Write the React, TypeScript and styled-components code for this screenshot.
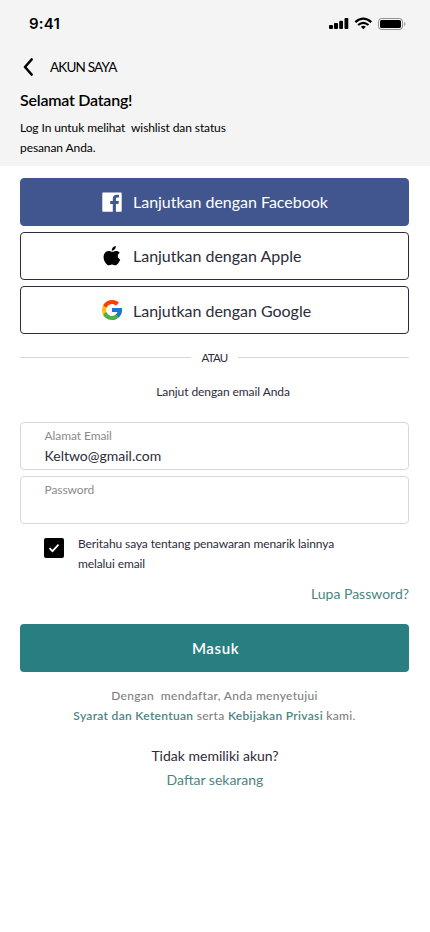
import React from "react";
import styled, { createGlobalStyle } from "styled-components";

const Global = createGlobalStyle`
  * { box-sizing: border-box; }
  body { margin: 0; background: #fff; }
  button, input { font: inherit; }
`;

const ink = "#2d2c39";
const teal = "#4b8583";

const Screen = styled.div`
  width: 430px;
  height: 932px;
  background: #fff;
  color: ${ink};
  font-family: Lato, "Liberation Sans", sans-serif;
  overflow: hidden;
`;

const Header = styled.header`
  height: 166px;
  background: #f4f4f4;
  color: #000;
`;

const StatusBar = styled.div`
  display: flex;
  justify-content: space-between;
  height: 47px;
  padding: 13px 24px 0 29px;
`;

const Clock = styled.span`
  margin-top: 1px;
  font: 600 15px/20px Inter, sans-serif;
  letter-spacing: 0.2px;
`;

const StatusIcons = styled.svg`
  width: 78px;
  height: 14px;
  margin-top: 4px;
`;

const TitleBar = styled.div`
  display: flex;
  align-items: center;
  height: 40px;
  padding-left: 23px;
  gap: 17px;
`;

const PageTitle = styled.span`
  font-size: 13.5px;
  line-height: 20px;
  letter-spacing: -0.8px;
`;

const Welcome = styled.h1`
  margin: 2px 20px 0;
  font-size: 16px;
  line-height: 22px;
  font-weight: 600;
  letter-spacing: -0.23px;
`;

const Intro = styled.p`
  margin: 7px 20px 0;
  font-size: 12px;
  line-height: 20px;
  white-space: pre-wrap;
  letter-spacing: -0.09px;
`;

const Main = styled.main`
  display: flex;
  flex-direction: column;
  padding: 12px 21px 0 20px;
`;

const SocialList = styled.div`
  display: grid;
  gap: 6px;
`;

const SocialButton = styled.button<{ $filled?: boolean }>`
  display: flex;
  align-items: center;
  gap: 11px;
  height: 48px;
  padding: 0 0 0 81px;
  border: 1px solid ${(p) => (p.$filled ? "#41568f" : ink)};
  border-radius: 4px;
  background: ${(p) => (p.$filled ? "#41568f" : "#fff")};
  color: ${(p) => (p.$filled ? "#fff" : ink)};
  font-size: 16px;
  line-height: 24px;
  letter-spacing: -0.02px;
  svg { flex: none; }
`;

const SocialLabel = styled.span<{ $drop?: number }>`
  padding-top: ${(p) => p.$drop ?? 0}px;
`;

const Divider = styled.div`
  display: flex;
  align-items: center;
  gap: 10px;
  height: 20px;
  margin-top: 13px;
  font-size: 11.5px;
  letter-spacing: -0.7px;
  &::before, &::after {
    content: "";
    flex: 1;
    height: 1px;
    background: #d8d8d8;
  }
`;

const EmailHint = styled.p`
  margin: 15px 0 0 17px;
  text-align: center;
  font-size: 12px;
  line-height: 20px;
  letter-spacing: -0.08px;
`;

const Fields = styled.div`
  display: grid;
  gap: 6px;
  margin-top: 20px;
`;

const Field = styled.label`
  display: flex;
  flex-direction: column;
  height: 48px;
  padding: 3px 23px 0 23.5px;
  border: 1px solid #d8d8d8;
  border-radius: 4px;
`;

const FieldLabel = styled.span`
  color: #8b8b8b;
  font-size: 12px;
  line-height: 20px;
  letter-spacing: -0.08px;
`;

const FieldValue = styled.span`
  font-size: 14px;
  line-height: 20px;
`;

const OptIn = styled.div`
  display: flex;
  gap: 14px;
  margin: 10px 0 0 24px;
  font-size: 12px;
  line-height: 20px;
  letter-spacing: -0.1px;
`;

const CheckBox = styled.span`
  display: grid;
  place-items: center;
  width: 20px;
  height: 20px;
  margin-top: 4px;
  border-radius: 2px;
  background: #000;
`;

const ForgotLink = styled.a`
  align-self: flex-end;
  margin-top: 10px;
  color: ${teal};
  font-size: 14px;
  line-height: 20px;
`;

const SubmitButton = styled.button`
  height: 48px;
  margin-top: 20px;
  padding: 0 0 0 2px;
  border: 0;
  border-radius: 4px;
  background: #297e82;
  color: #fff;
  font-size: 15px;
  font-weight: 600;
  letter-spacing: 0.6px;
`;

const Terms = styled.p`
  margin: 14px 0 0;
  color: #7f7f7f;
  text-align: center;
  white-space: pre-wrap;
  font-size: 12px;
  line-height: 20px;
  letter-spacing: 0.31px;
  font-weight: 500;
  a { color: ${teal}; font-weight: 600; }
`;

const SignUp = styled.div`
  display: flex;
  flex-direction: column;
  align-items: center;
  margin-top: 18px;
  padding-left: 1px;
  font-size: 14px;
  line-height: 24px;
  a { color: ${teal}; }
`;

const StatusGlyphs = () => (
  <StatusIcons viewBox="0 0 78 14">
    <rect x="1" y="8" width="4" height="4" rx="1" />
    <rect x="6" y="6" width="4" height="6" rx="1" />
    <rect x="11.2" y="3.7" width="3.8" height="8.3" rx="1" />
    <rect x="16.5" y="1" width="3.8" height="11" rx="1" />
    <g fill="none" stroke="#000" strokeWidth="2.2">
      <path d="M27.3 5.1Q35.3-1.8 43.3 5.1" />
      <path d="M30.1 8Q35.3 3.6 40.5 8" />
    </g>
    <path d="M32.8 9.7Q35.3 7.8 37.8 9.7L35.3 12.2Z" />
    <rect x="50.5" y="1.5" width="24" height="11" rx="3" fill="none" stroke="#000" strokeOpacity=".4" />
    <rect x="52" y="3" width="21" height="8" rx="1.6" />
    <path d="M76.2 5v4c1.7-.7 1.7-3.3 0-4Z" fillOpacity=".4" />
  </StatusIcons>
);

const BackIcon = () => (
  <svg width="10" height="18" viewBox="0 0 10 18" fill="none" stroke="#000" strokeWidth="2.6" strokeLinecap="round" strokeLinejoin="round">
    <path d="M8.6 1.5 2 9l6.600 7.500" />
  </svg>
);

const FacebookIcon = () => (
  <svg width="20" height="20" viewBox="0 0 20 20">
    <path fill="#fff" d="M1 .5h18q.7 0 .7.7V19q0 .7-.7.7h-5.100V12h2.600l.4-3h-3V7.100c0-.9.3-1.500 1.500-1.500H17V2.900c-.3 0-1.200-.1-2.300-.1-2.300 0-3.900 1.400-3.900 4V9H8.200v3h2.600v7.700H1q-.7 0-.7-.7V1.200Q.3.5 1 .5Z" />
  </svg>
);

const AppleIcon = () => (
  <svg width="20" height="20" viewBox="0 0 20 20">
    <path d="M13.800.1c.1 1.200-.3 2.300-1 3.200-.8.9-1.900 1.500-3 1.400-.1-1.100.4-2.300 1.100-3.100C11.600.8 12.800.2 13.800.1ZM17.700 6.700c-1.200.8-1.900 1.900-1.900 3.300 0 1.600.9 2.900 2.400 3.500-.3 1-.8 2-1.500 3-.9 1.300-1.800 2.700-3.300 2.700-1.400 0-1.800-.8-3.400-.8s-2.100.8-3.500.8-2.300-1.300-3.200-2.600C1.400 13.900.9 9.600 2.700 7.200c.9-1.400 2.400-2.200 3.900-2.200 1.600 0 2.600.8 3.900.8s2-.8 3.800-.8c1.300 0 2.600.7 3.400 1.700Z" />
  </svg>
);

const GoogleIcon = () => (
  <svg width="20" height="20" viewBox="4 4 40 40">
    <path fill="#ffc107" d="M43.600 20.100H42V20H24v8h11.300C33.700 32.700 29.200 36 24 36c-6.600 0-12-5.400-12-12s5.400-12 12-12c3.100 0 5.800 1.200 8 3l5.600-5.600C34 6.100 29.300 4 24 4 13 4 4 13 4 24s9 20 20 20 20-9 20-20c0-1.300-.1-2.700-.4-3.900Z" />
    <path fill="#ff3d00" d="m6.300 14.700 6.600 4.800C14.700 15.100 19 12 24 12c3.100 0 5.800 1.200 8 3l5.600-5.600C34 6.100 29.300 4 24 4 16.300 4 9.700 8.300 6.300 14.700Z" />
    <path fill="#4caf50" d="M24 44c5.200 0 9.900-2 13.400-5.200l-6.200-5.200C29.200 35.100 26.700 36 24 36c-5.200 0-9.600-3.300-11.300-7.900l-6.500 5C9.500 39.600 16.200 44 24 44Z" />
    <path fill="#1976d2" d="M43.600 20.100H42V20H24v8h11.300c-.8 2.200-2.200 4.200-4.100 5.600l6.200 5.200C37 39.200 44 34 44 24c0-1.300-.1-2.700-.4-3.900Z" />
  </svg>
);

const CheckIcon = () => (
  <svg width="12" height="10" viewBox="0 0 12 10" fill="none" stroke="#fff" strokeWidth="1.7">
    <path d="m1.500 5.200 3 3 6-6.500" />
  </svg>
);

export default function App() {
  return (
    <Screen>
      <Global />
      <Header>
        <StatusBar>
          <Clock>9:41</Clock>
          <StatusGlyphs />
        </StatusBar>
        <TitleBar>
          <BackIcon />
          <PageTitle>AKUN SAYA</PageTitle>
        </TitleBar>
        <Welcome>Selamat Datang!</Welcome>
        <Intro>{"Log In untuk melihat  wishlist dan status\npesanan Anda."}</Intro>
      </Header>
      <Main>
        <SocialList>
          <SocialButton $filled><FacebookIcon /><SocialLabel>Lanjutkan dengan Facebook</SocialLabel></SocialButton>
          <SocialButton><AppleIcon /><SocialLabel>Lanjutkan dengan Apple</SocialLabel></SocialButton>
          <SocialButton><GoogleIcon /><SocialLabel $drop={2}>Lanjutkan dengan Google</SocialLabel></SocialButton>
        </SocialList>
        <Divider>ATAU</Divider>
        <EmailHint>Lanjut dengan email Anda</EmailHint>
        <Fields>
          <Field>
            <FieldLabel>Alamat Email</FieldLabel>
            <FieldValue>Keltwo@gmail.com</FieldValue>
          </Field>
          <Field>
            <FieldLabel>Password</FieldLabel>
          </Field>
        </Fields>
        <OptIn>
          <CheckBox><CheckIcon /></CheckBox>
          <span>Beritahu saya tentang penawaran menarik lainnya<br />melalui email</span>
        </OptIn>
        <ForgotLink>Lupa Password?</ForgotLink>
        <SubmitButton>Masuk</SubmitButton>
        <Terms>
          {"Dengan  mendaftar, Anda menyetujui\n"}
          <a>Syarat dan Ketentuan</a> serta <a>Kebijakan Privasi</a> kami.
        </Terms>
        <SignUp>
          <span>Tidak memiliki akun?</span>
          <a>Daftar sekarang</a>
        </SignUp>
      </Main>
    </Screen>
  );
}
